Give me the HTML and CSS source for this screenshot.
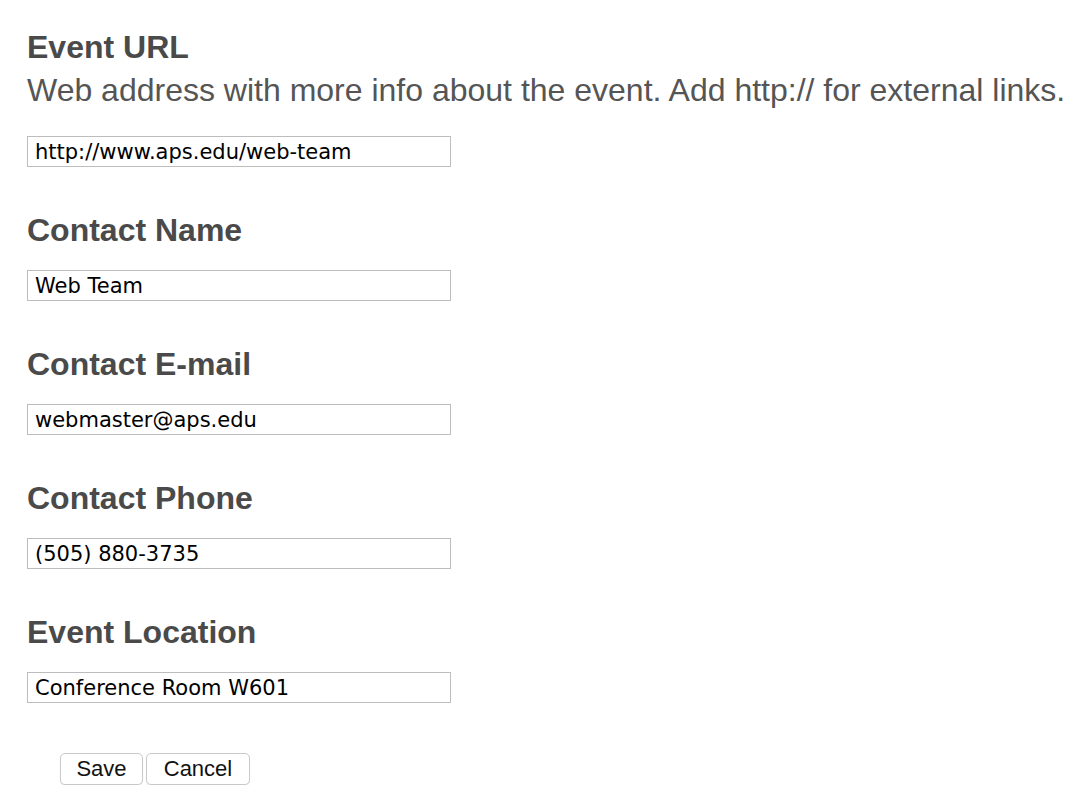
FILE: index.html
```html
<!DOCTYPE html>
<html>
<head>
<meta charset="utf-8">
<link rel="stylesheet" href="styles.css">
</head>
<body>
<form class="form">
  <div class="field">
    <h2 class="label">Event URL</h2>
    <p class="desc">Web address with more info about the event. Add http:// for external links.</p>
    <input class="input input-first" type="text" value="http://www.aps.edu/web-team">
  </div>
  <div class="field">
    <h2 class="label">Contact Name</h2>
    <input class="input" type="text" value="Web Team">
  </div>
  <div class="field">
    <h2 class="label">Contact E-mail</h2>
    <input class="input" type="text" value="webmaster@aps.edu">
  </div>
  <div class="field">
    <h2 class="label">Contact Phone</h2>
    <input class="input" type="text" value="(505) 880-3735">
  </div>
  <div class="field">
    <h2 class="label">Event Location</h2>
    <input class="input" type="text" value="Conference Room W601">
  </div>
  <div class="actions">
    <button class="btn" type="button">Save</button>
    <button class="btn" type="button">Cancel</button>
  </div>
</form>
</body>
</html>
```
FILE: styles.css
```css
html, body {
  margin: 0;
  padding: 0;
  background: #fff;
}
body {
  font-family: "Liberation Sans", Arial, sans-serif;
  color: #4d4d4d;
}
.form {
  padding: 29px 0 0 27px;
}
.field {
  display: block;
  margin-bottom: 45px;
}
.label {
  margin: 0;
  font-size: 32px;
  line-height: 36px;
  font-weight: bold;
  color: #4a4a4a;
}
.desc {
  margin: 7px 0 0;
  font-size: 32px;
  line-height: 36px;
  color: #555;
  white-space: nowrap;
}
.input {
  display: block;
  box-sizing: border-box;
  width: 424px;
  height: 31px;
  margin: 22px 0 0;
  padding: 1px 7px 0;
  border: 1px solid #bdbdbd;
  border-radius: 0;
  font-family: "DejaVu Sans", "Lucida Grande", sans-serif;
  font-size: 21px;
  color: #000;
  background: #fff;
  outline: none;
}
.input-first {
  margin-top: 28px;
}
.actions {
  display: flex;
  gap: 3px;
  padding-left: 33px;
  margin-top: 50px;
}
.btn {
  box-sizing: border-box;
  height: 32px;
  padding: 0;
  border: 1px solid #c9c9c9;
  border-radius: 5px;
  background: #fff;
  font-family: "Liberation Sans", Arial, sans-serif;
  font-size: 22px;
  color: #111;
  box-shadow: 0 1px 1px rgba(0,0,0,0.08);
}
.btn:first-child {
  width: 83px;
}
.btn:last-child {
  width: 104px;
}
```
